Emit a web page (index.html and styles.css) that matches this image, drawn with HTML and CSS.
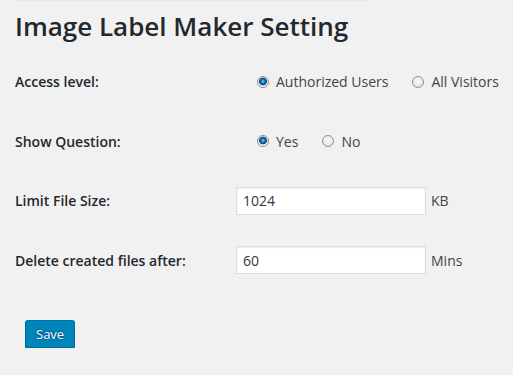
FILE: index.html
```html
<!DOCTYPE html>
<html>
<head>
<meta charset="utf-8">
<link rel="stylesheet" href="styles.css">
</head>
<body>
<div class="topline"></div>
<div class="wrap">
  <h1 class="title">Image Label Maker Setting</h1>
  <form class="settings">
    <div class="row">
      <div class="label">Access level:</div>
      <div class="field radios">
        <label class="opt"><input type="radio" name="access" checked> Authorized Users</label>
        <label class="opt"><input type="radio" name="access"> All Visitors</label>
      </div>
    </div>
    <div class="row">
      <div class="label">Show Question:</div>
      <div class="field radios">
        <label class="opt"><input type="radio" name="q" checked> Yes</label>
        <label class="opt"><input type="radio" name="q"> No</label>
      </div>
    </div>
    <div class="row">
      <div class="label">Limit File Size:</div>
      <div class="field">
        <input class="text" type="text" value="1024"><span class="unit">KB</span>
      </div>
    </div>
    <div class="row">
      <div class="label">Delete created files after:</div>
      <div class="field">
        <input class="text" type="text" value="60"><span class="unit">Mins</span>
      </div>
    </div>
    <div class="submit">
      <button type="button" class="btn">Save</button>
    </div>
  </form>
</div>
</body>
</html>
```

FILE: styles.css
```css
html, body {
  margin: 0;
  padding: 0;
  background: #f1f1f1;
}
body {
  font-family: "Open Sans", "Noto Sans", sans-serif;
  color: #444;
  font-size: 14px;
}
.topline {
  margin-left: 17px;
  width: 350px;
  height: 1px;
  background: #e8e8e8;
}
.wrap {
  padding-left: 15px;
}
.title {
  margin: 8px 0 0;
  font-size: 26px;
  line-height: 34px;
  font-weight: 600;
  color: #23282d;
}
.settings {
  margin-top: 9px;
}
.row {
  display: flex;
  align-items: center;
  height: 59.5px;
}
.label {
  width: 221px;
  flex: none;
  font-weight: 600;
  color: #23282d;
  font-size: 14px;
}
.field {
  display: flex;
  align-items: center;
}
.radios {
  padding-left: 21px;
  gap: 24px;
}
.opt {
  display: flex;
  align-items: center;
  color: #444;
}
.opt input {
  -webkit-appearance: none;
  appearance: none;
  width: 12px;
  height: 12px;
  margin: 0 7px 0 0;
  border-radius: 50%;
  border: 1px solid #8e8f8f;
  background: radial-gradient(circle at 50% 40%, #fafafa 0, #e6e6e6 70%, #d4d4d4 100%);
}
.opt input:checked {
  background: radial-gradient(circle at 50% 45%, #8fd3ff 0, #1b86d0 1.5px, #0b5e9e 2.8px, #26384a 3.6px, #f6f6f6 4.2px, #e2e2e2 100%);
}
.text {
  box-sizing: border-box;
  width: 190px;
  height: 28px;
  margin: 0;
  padding: 0 6px;
  border: 1px solid #ddd;
  box-shadow: inset 0 1px 2px rgba(0,0,0,.07);
  background: #fff;
  font-family: "Open Sans", "Noto Sans", sans-serif;
  font-size: 14px;
  color: #32373c;
}
.unit {
  margin-left: 5px;
  color: #444;
}
.submit {
  padding: 30px 0 0 10px;
}
.btn {
  height: 28px;
  padding: 0 10px 1px;
  border: 1px solid #0073aa;
  border-color: #0073aa #006799 #006799;
  border-radius: 3px;
  background: #0085ba;
  box-shadow: 0 1px 0 #006799;
  color: #fff;
  font-family: "Open Sans", "Noto Sans", sans-serif;
  font-size: 13px;
  line-height: 26px;
  text-shadow: 0 -1px 1px #006799, 1px 0 1px #006799, 0 1px 1px #006799, -1px 0 1px #006799;
}
```
